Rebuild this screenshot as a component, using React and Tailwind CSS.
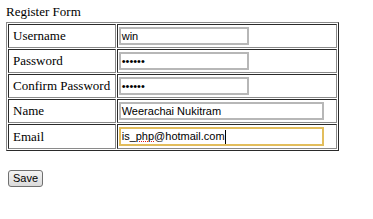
import React from "react";

const rows = [
  { label: "Username", value: "win", width: "w-[130px]" },
  { label: "Password", value: "••••••", width: "w-[130px]" },
  { label: "Confirm Password", value: "••••••", width: "w-[130px]" },
  { label: "Name", value: "Weerachai Nukitram", width: "w-[205px]" },
];

function Cell({ className = "", children }) {
  return (
    <div
      className={`flex items-center border border-t-[#2a2a2a] border-l-[#2a2a2a] border-b-[#8a8a8a] border-r-[#8a8a8a] ${className}`}
    >
      {children}
    </div>
  );
}

export default function App() {
  return (
    <div className="w-[373px] h-[219px] bg-white pl-[6px] pt-[4px] text-black">
      <div className="font-['Liberation_Serif',serif] text-[13px] leading-[15px] h-[18px]">
        Register Form
      </div>

      {/* Form table */}
      <div className="w-[333px] border border-t-[#8a8a8a] border-l-[#8a8a8a] border-b-[#2a2a2a] border-r-[#2a2a2a] p-[1px] flex flex-col gap-[1px]">
        {rows.map((row) => (
          <div key={row.label} className="flex gap-[1px] h-[24px]">
            <Cell className="w-[108px] pl-[4px] font-['Liberation_Serif',serif] text-[13px]">
              {row.label}
            </Cell>
            <Cell className="w-[221px] pl-[1px]">
              <div
                className={`${row.width} h-[18px] border-2 border-[#b7b7b7] pl-[1px] flex items-center font-['Liberation_Sans',Arial,sans-serif] text-[11px] leading-none`}
              >
                {row.value}
              </div>
            </Cell>
          </div>
        ))}
        <div className="flex gap-[1px] h-[25px]">
          <Cell className="w-[108px] pl-[4px] font-['Liberation_Serif',serif] text-[13px]">
            Email
          </Cell>
          <Cell className="w-[221px] pl-[1px]">
            <div className="w-[205px] h-[19px] border-2 border-[#e2bd5c] pl-[1px] flex items-center font-['Liberation_Sans',Arial,sans-serif] text-[11px] leading-none">
              is_
              <span className="underline decoration-dotted decoration-[#e0201c] decoration-1 underline-offset-1">
                php
              </span>
              @hotmail.com
              <span className="w-[1px] h-[14px] bg-black" />
            </div>
          </Cell>
        </div>
      </div>

      <button className="mt-[19px] ml-[2px] h-[17px] px-[4px] rounded-[3px] border border-[#707070] bg-gradient-to-b from-[#f4f4f4] to-[#dadada] font-['Liberation_Sans',Arial,sans-serif] text-[11px] leading-none">
        Save
      </button>
    </div>
  );
}
